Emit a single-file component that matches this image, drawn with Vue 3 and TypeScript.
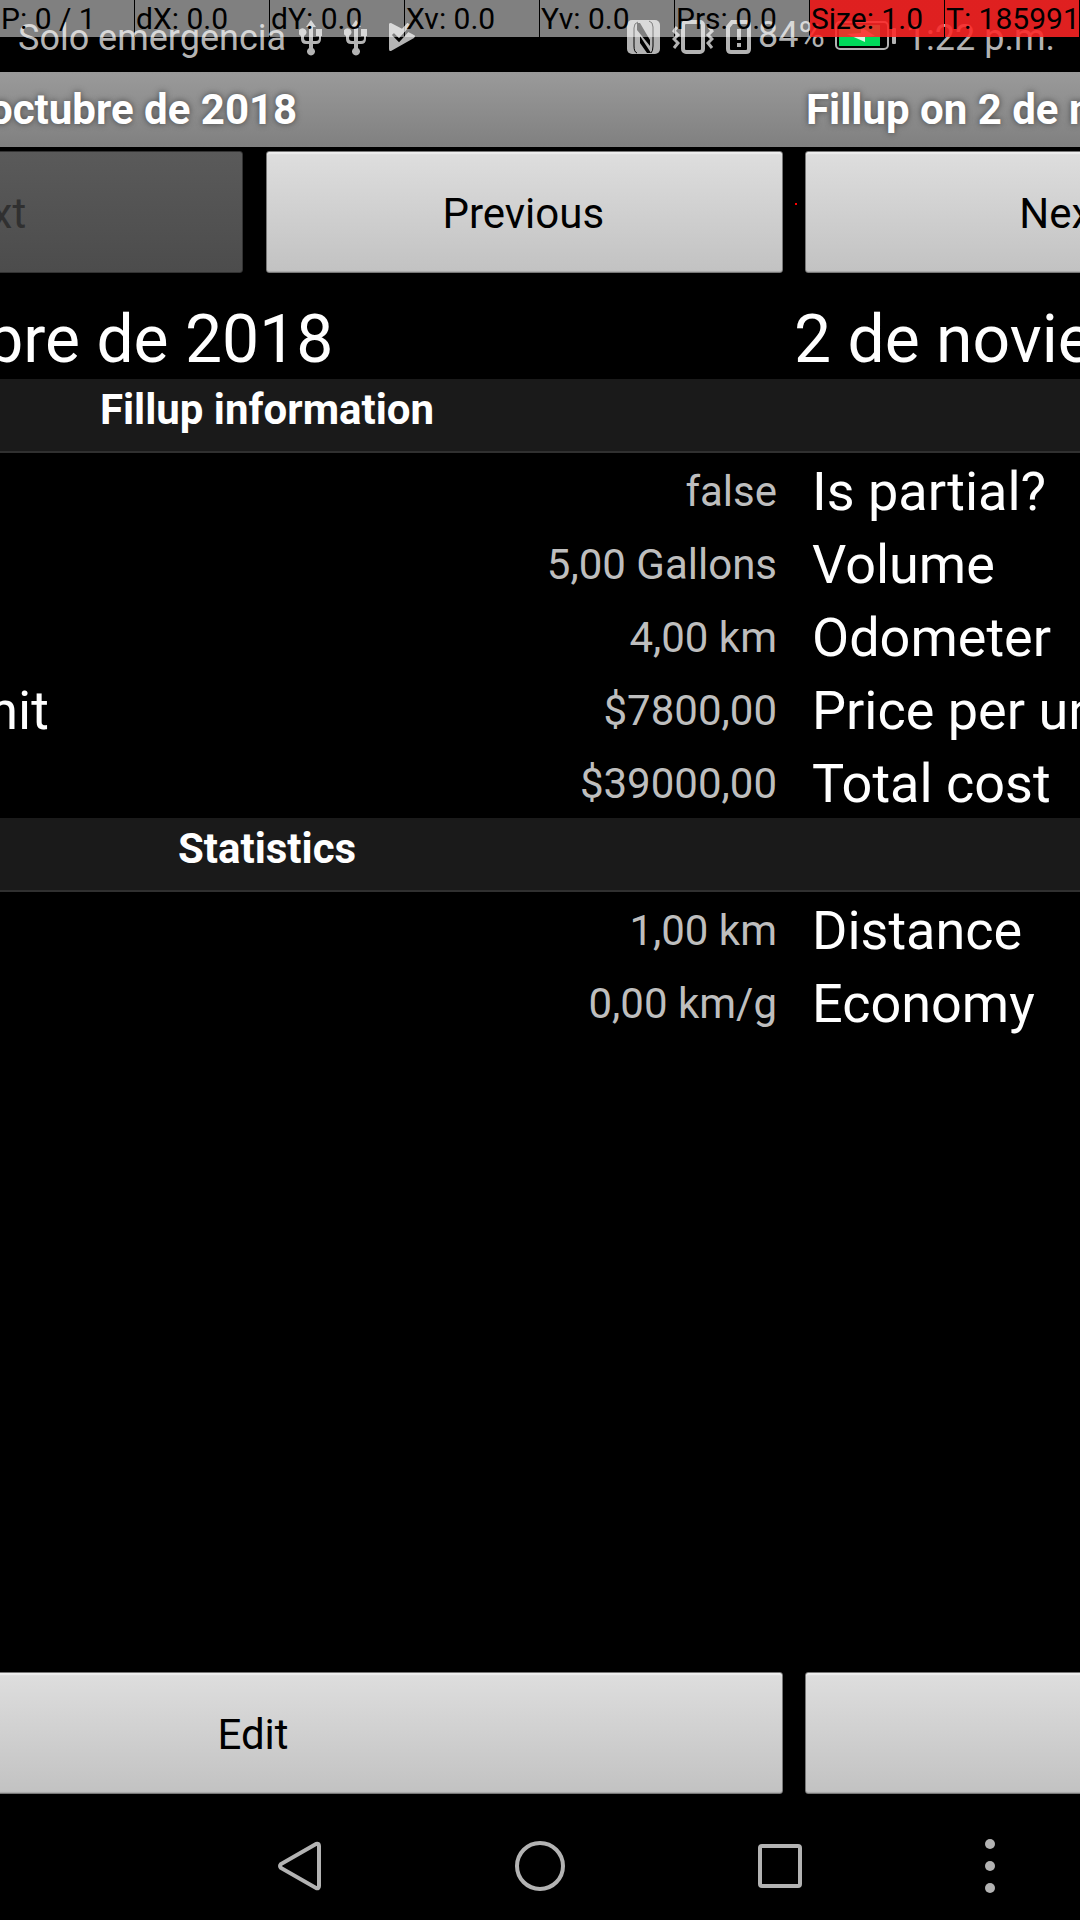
<script setup lang="ts">
interface Row {
  label: string
  value: string
}
interface Fillup {
  id: number
  title: string
  date: string
  hasNext: boolean
  info: Row[]
  stats: Row[]
}

const pointer = [
  { text: 'P: 0 / 1', hot: false },
  { text: 'dX: 0.0', hot: false },
  { text: 'dY: 0.0', hot: false },
  { text: 'Xv: 0.0', hot: false },
  { text: 'Yv: 0.0', hot: false },
  { text: 'Prs: 0.0', hot: false },
  { text: 'Size: 1.0', hot: true },
  { text: 'T: 185991', hot: true },
]

const info: Row[] = [
  { label: 'Is partial?', value: 'false' },
  { label: 'Volume', value: '5,00 Gallons' },
  { label: 'Odometer', value: '4,00 km' },
  { label: 'Price per unit', value: '$7800,00' },
  { label: 'Total cost', value: '$39000,00' },
]
const stats: Row[] = [
  { label: 'Distance', value: '1,00 km' },
  { label: 'Economy', value: '0,00 km/g' },
]

const fillups: Fillup[] = [
  { id: 1, title: 'Fillup on 2 de octubre de 2018', date: '2 de octubre de 2018', hasNext: false, info, stats },
  { id: 2, title: 'Fillup on 2 de noviembre de 2018', date: '2 de noviembre de 2018', hasNext: true, info, stats },
]
</script>

<template>
  <div class="screen">
    <header class="status">
      <span class="carrier">Solo emergencia</span>
      <svg v-for="n in 2" :key="n" class="usb" viewBox="0 0 24 36" width="24" height="36">
        <path d="M12 0l5 7h-3v14h3q3 0 3-3v-2h-3V9h6v7h-1v3q0 5-5 5h-3v4a4 4 0 1 1-4 0v-4H7q-5 0-5-5v-3a4 4 0 1 1 3 0v2q0 3 3 3h2V7H7z" />
      </svg>
      <svg class="play" viewBox="0 0 26 28" width="26" height="28">
        <path d="M0 1q0-1 2-1l23 12q2 1 0 3L2 28H1q-1 0-1-2z" />
        <path d="M4 11l6 6L22 4" fill="none" stroke="#000" stroke-width="3" />
        <path d="M5 7l5 5L20 1" fill="none" stroke="currentColor" stroke-width="4" />
      </svg>
      <span class="grow"></span>
      <svg class="nfc" viewBox="0 0 33 34" width="33" height="34">
        <rect width="33" height="34" rx="5" />
        <path d="M11 2Q7 3 7 8v18q0 6 3 7M22 1q4 1 4 6v19q0 5-2 7" fill="none" stroke="#000" stroke-width="1" />
        <path d="M10 3h3l10 17v6L10 10zM13 16l11 17h-4l-7-10z" fill="#000" />
      </svg>
      <svg class="vibrate" viewBox="0 0 42 34" width="42" height="34">
        <g fill="none" stroke="currentColor" stroke-width="4">
          <rect x="11" y="2" width="20" height="30" rx="3" />
          <path d="M5 7L2 11l4 4-4 4 4 4-4 5M37 7l3 4-4 4 4 4-4 4 4 5" stroke-width="3" />
        </g>
      </svg>
      <svg class="sim" viewBox="0 0 25 34" width="25" height="34">
        <path d="M6 2h14q3 0 3 3v24q0 3-3 3H5q-3 0-3-3V7z" fill="none" stroke="currentColor" stroke-width="4" />
        <path d="M11 9h4v11h-4zM11 23h4v4h-4z" />
      </svg>
      <span class="percent">84%</span>
      <svg class="battery" viewBox="0 0 61 29" width="61" height="29">
        <rect x="1" y="1" width="52" height="27" rx="4" fill="none" stroke="currentColor" stroke-width="2" />
        <rect x="4" y="4" width="41" height="21" fill="#00d95a" />
        <path d="M12 13L30 21V16L40 15L26 6V12z" fill="#d8f8e2" />
        <rect x="57" y="7" width="4" height="16" rx="1" />
      </svg>
      <span class="clock">1:22 p.m.</span>
    </header>

    <div class="pointer" aria-hidden="true">
      <span v-for="cell in pointer" :key="cell.text" class="cell" :class="{ hot: cell.hot }">{{ cell.text }}</span>
    </div>

    <main class="viewport">
      <div class="strip">
        <section v-for="f in fillups" :key="f.id" class="page">
          <h1 class="title">{{ f.title }}</h1>
          <div class="pair">
            <button type="button" class="btn" :disabled="!f.hasNext">Next</button>
            <button type="button" class="btn">Previous</button>
          </div>
          <p class="date">{{ f.date }}</p>
          <h2 class="section">Fillup information</h2>
          <table class="facts">
            <tbody>
              <tr v-for="r in f.info" :key="r.label">
                <th scope="row">{{ r.label }}</th>
                <td>{{ r.value }}</td>
              </tr>
            </tbody>
          </table>
          <h2 class="section">Statistics</h2>
          <table class="facts">
            <tbody>
              <tr v-for="r in f.stats" :key="r.label">
                <th scope="row">{{ r.label }}</th>
                <td>{{ r.value }}</td>
              </tr>
            </tbody>
          </table>
          <div class="pair bottom">
            <button type="button" class="btn">Edit</button>
          </div>
        </section>
      </div>
      <i class="touch"></i>
    </main>

    <nav class="nav">
      <button type="button" class="key back" aria-label="Back">
        <svg viewBox="0 0 44 50" width="44" height="50">
          <path d="M38 3L3 23q-2 2 0 4L38 47q3 1 3-2V5q0-3-3-2z" />
        </svg>
      </button>
      <button type="button" class="key" aria-label="Home">
        <svg viewBox="0 0 50 50" width="50" height="50"><circle cx="25" cy="25" r="23" /></svg>
      </button>
      <button type="button" class="key" aria-label="Recent apps">
        <svg viewBox="0 0 46 46" width="46" height="46"><rect x="3" y="3" width="40" height="40" rx="2" /></svg>
      </button>
      <button type="button" class="key" aria-label="Menu">
        <svg class="dots" viewBox="0 0 12 56" width="12" height="56">
          <circle cx="6" cy="6" r="5" /><circle cx="6" cy="28" r="5" /><circle cx="6" cy="50" r="5" />
        </svg>
      </button>
    </nav>
  </div>
</template>

<style>
body {
  background: #000;
}
</style>

<style scoped>
.screen {
  position: relative;
  display: flex;
  flex-direction: column;
  min-height: 100vh;
  overflow: hidden;
  background: #000;
  color: #fff;
  font-family: Roboto, "Noto Sans", sans-serif;
}
.status {
  display: flex;
  align-items: flex-start;
  box-sizing: border-box;
  height: 72px;
  padding: 20px 25px 0 18px;
  color: #b3b3b3;
  font-size: 36px;
  line-height: 36px;
  white-space: nowrap;
}
.status svg {
  flex: none;
  fill: currentColor;
}
.usb {
  margin-left: 21px;
}
.carrier + .usb {
  margin-left: 13px;
}
.play {
  margin: 3px 0 0 21px;
}
.grow {
  flex: 1;
}
.vibrate,
.sim {
  margin-left: 12px;
}
.percent {
  margin: -3px 10px 0 7px;
}
.battery {
  margin-top: 1px;
}
.clock {
  margin-left: 10px;
}
.pointer {
  position: absolute;
  inset: 0 0 auto;
  display: flex;
}
.cell {
  flex: 1 1 0;
  box-sizing: border-box;
  height: 37px;
  margin-right: 1px;
  padding-left: 1px;
  overflow: hidden;
  background: rgba(255, 255, 255, 0.5);
  color: #000;
  font-size: 30px;
  line-height: 37px;
  white-space: nowrap;
}
.hot {
  background: linear-gradient(rgba(255, 0, 0, 0.75), rgba(255, 0, 0, 0.75)), rgba(255, 255, 255, 0.5);
}
.viewport {
  position: relative;
  display: flex;
  flex: 1;
}
/* The pager is caught mid-swipe: the first page is still leaving on the left. */
.strip {
  display: flex;
  flex: 1;
  min-width: 0;
  margin: 0 286px 0 -286px;
}
.page {
  display: flex;
  flex: none;
  flex-direction: column;
  width: 100%;
}
.title {
  height: 75px;
  margin: 0;
  padding-left: 12px;
  background: linear-gradient(#9a9a9a, #808080);
  font-size: 42px;
  font-weight: 700;
  line-height: 76px;
  text-shadow: 0 0 6px #444;
  white-space: nowrap;
}
.pair {
  display: flex;
  gap: 23px;
  padding: 4px 11px 0;
}
.btn {
  flex: 1 1 0;
  height: 122px;
  padding: 2px 2px 0 0;
  border: 1px solid #777;
  border-radius: 3px;
  background: linear-gradient(#dedede, #c2c2c2);
  box-shadow: inset 0 3px 1px -1px #eee, inset 0 -2px 1px -1px #aaa;
  color: #000;
  font: 400 42px/49px Roboto, "Noto Sans", sans-serif;
}
.btn:disabled {
  border-color: #333;
  background: linear-gradient(#5a5a5a, #4c4c4c);
  box-shadow: none;
  color: #303030;
}
.date {
  margin: 27px 0 0;
  font-size: 66px;
  line-height: 79px;
  white-space: nowrap;
}
.section {
  box-sizing: border-box;
  height: 74px;
  margin: 0;
  padding: 6px 0 0 26px;
  border-bottom: 2px solid #303030;
  background: #1a1a1a;
  font-size: 42px;
  font-weight: 700;
  line-height: 50px;
  text-align: center;
}
.facts {
  width: 100%;
  padding: 0 17px 0 18px;
  border-spacing: 0;
  white-space: nowrap;
}
.facts th,
.facts td {
  padding: 4px 0 0;
  font-weight: 400;
  line-height: 69px;
}
.facts th {
  font-size: 54px;
  text-align: left;
}
.facts td {
  color: #bebebe;
  font-size: 42px;
  text-align: right;
}
.bottom {
  margin-top: auto;
}
.touch {
  position: absolute;
  top: 131px;
  left: 795px;
  width: 2px;
  height: 2px;
  background: #f00;
}
.nav {
  display: grid;
  grid-template-columns: 3fr 4fr 4fr 4fr 3fr;
  align-items: center;
  height: 108px;
  padding-top: 18px;
}
.key {
  display: flex;
  align-items: center;
  justify-content: center;
  height: 108px;
  padding: 0;
  border: 0;
  background: none;
  color: #b3b3b3;
}
.key svg {
  fill: none;
  stroke: currentColor;
  stroke-width: 4;
}
.key .dots {
  fill: currentColor;
  stroke: none;
}
.back {
  grid-column: 2;
}
</style>
